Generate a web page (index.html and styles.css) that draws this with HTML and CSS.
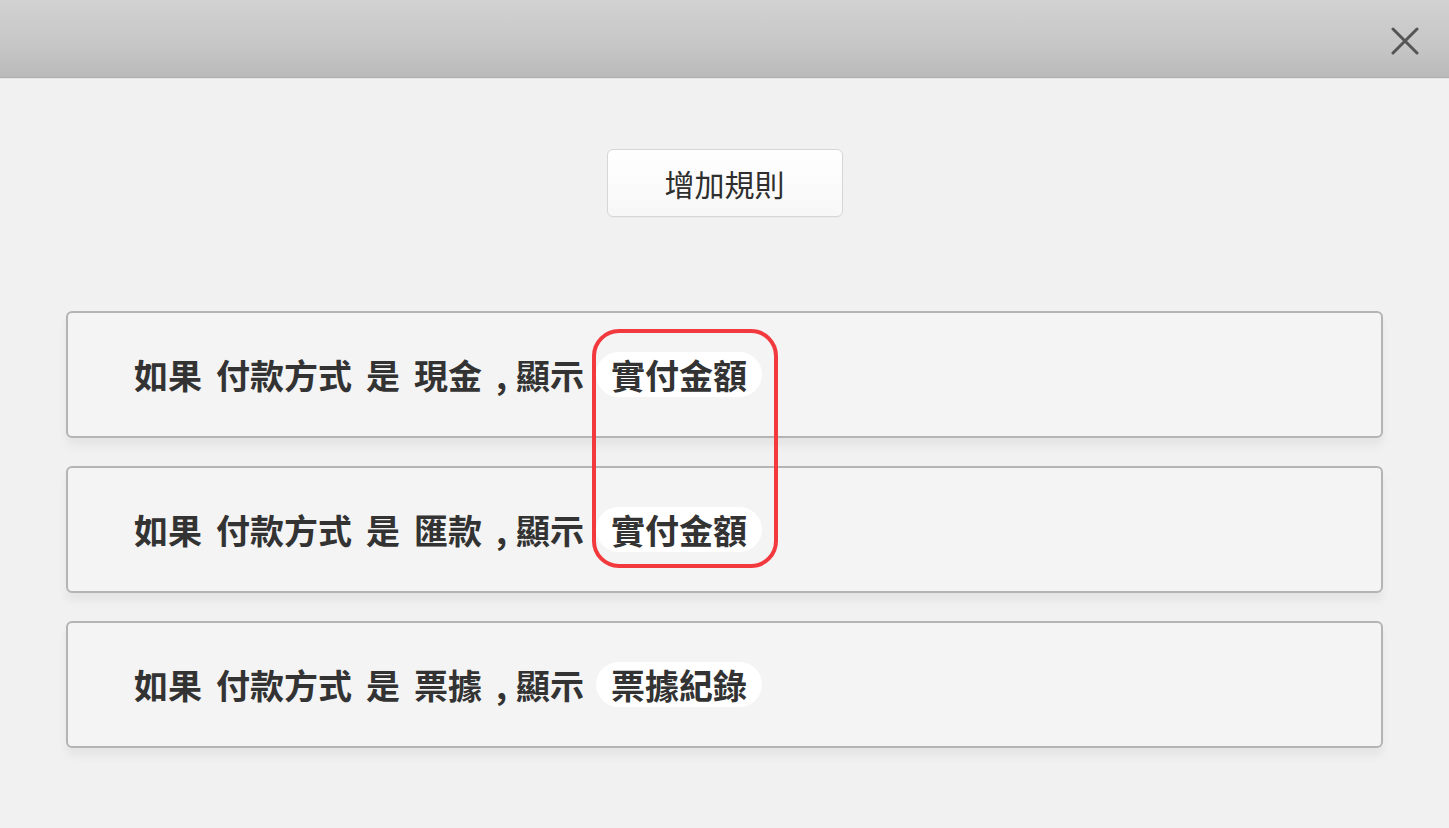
FILE: index.html
```html
<!DOCTYPE html>
<html lang="zh-Hant">
<head>
<meta charset="utf-8">
<title>規則</title>
<link rel="stylesheet" href="styles.css">
</head>
<body>
<div class="dialog">
  <header class="titlebar">
    <button class="close" aria-label="關閉">
      <svg width="28" height="28" viewBox="0 0 28 28"><path d="M2 2 L26 26 M26 2 L2 26" stroke="#555" stroke-width="3" fill="none" stroke-linecap="round"/></svg>
    </button>
  </header>
  <main class="content">
    <div class="actions">
      <button class="add-btn">增加規則</button>
    </div>
    <div class="rules">
      <div class="rule">
        <span class="word">如果</span><span class="word">付款方式</span><span class="word">是</span><span class="word">現金</span><span class="comma">,</span><span class="word">顯示</span><span class="pill">實付金額</span>
      </div>
      <div class="rule">
        <span class="word">如果</span><span class="word">付款方式</span><span class="word">是</span><span class="word">匯款</span><span class="comma">,</span><span class="word">顯示</span><span class="pill">實付金額</span>
      </div>
      <div class="rule">
        <span class="word">如果</span><span class="word">付款方式</span><span class="word">是</span><span class="word">票據</span><span class="comma">,</span><span class="word">顯示</span><span class="pill">票據紀錄</span>
      </div>
    </div>
    <div class="highlight"></div>
  </main>
</div>
</body>
</html>
```

FILE: styles.css
```css
html, body {
  margin: 0;
  padding: 0;
  width: 1449px;
  height: 828px;
  overflow: hidden;
  background: #f1f1f1;
  font-family: "Noto Sans CJK TC", "Noto Sans", sans-serif;
  color: #333;
}

.dialog {
  position: relative;
  width: 1449px;
  height: 828px;
  background: #f1f1f1;
}

.titlebar {
  height: 77px;
  background: linear-gradient(to bottom, #d2d2d2 0%, #c6c6c6 60%, #bababa 100%);
  border-bottom: 1px solid #aeaeae;
  box-shadow: 0 1px 0 #e6e6e6;
  display: flex;
  justify-content: flex-end;
  align-items: flex-start;
}

.close {
  margin: 27px 30px 0 0;
  padding: 0;
  width: 28px;
  height: 28px;
  border: none;
  background: transparent;
  display: flex;
}

.content {
  position: relative;
  padding: 0 66px;
}

.actions {
  display: flex;
  justify-content: center;
  padding-top: 71px;
}

.add-btn {
  width: 236px;
  height: 68px;
  border: 1px solid #d6d6d6;
  border-radius: 6px;
  background: linear-gradient(to bottom, #ffffff, #f7f7f7);
  font-family: "Noto Sans CJK TC", "Noto Sans", sans-serif;
  font-size: 30px;
  color: #2e2e2e;
  padding: 0;
  box-shadow: 0 1px 1px rgba(0,0,0,0.03);
}

.rules {
  margin-top: 94px;
  display: flex;
  flex-direction: column;
  gap: 28px;
}

.rule {
  height: 123px;
  border: 2px solid #b4b4b4;
  border-radius: 6px;
  background: #f4f4f4;
  box-shadow: 0 8px 10px rgba(0,0,0,0.05);
  display: flex;
  align-items: center;
  padding-left: 66px;
  gap: 14px;
  font-size: 34px;
  font-weight: 700;
  color: #333;
}

.word, .comma {
  line-height: 45px;
}

.comma {
  margin-right: -5px;
}

.pill {
  background: #ffffff;
  border-radius: 23px;
  height: 45px;
  line-height: 45px;
  padding: 0 15px;
  margin-left: -2px;
}

.highlight {
  position: absolute;
  left: 592px;
  top: 251px;
  width: 178px;
  height: 231px;
  border: 4px solid #f2393e;
  border-radius: 27px;
}
```
